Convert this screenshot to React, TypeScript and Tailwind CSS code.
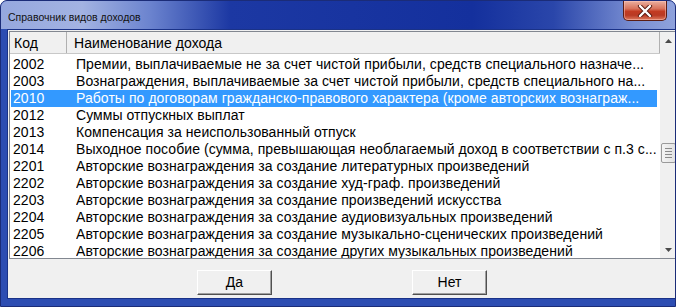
import React from "react";

const rows: [string, string][] = [
  ["2002", "Премии, выплачиваемые не за счет чистой прибыли, средств специального назначе..."],
  ["2003", "Вознаграждения, выплачиваемые за счет чистой прибыли, средств специального на..."],
  ["2010", "Работы по договорам гражданско-правового характера (кроме авторских вознаграж..."],
  ["2012", "Суммы отпускных выплат"],
  ["2013", "Компенсация за неиспользованный отпуск"],
  ["2014", "Выходное пособие (сумма, превышающая необлагаемый доход в соответствии с п.3 с..."],
  ["2201", "Авторские вознаграждения за создание литературных произведений"],
  ["2202", "Авторские вознаграждения за создание худ-граф. произведений"],
  ["2203", "Авторские вознаграждения за создание произведений искусства"],
  ["2204", "Авторские вознаграждения за создание аудиовизуальных произведений"],
  ["2205", "Авторские вознаграждения за создание музыкально-сценических произведений"],
  ["2206", "Авторские вознаграждения за создание других музыкальных произведений"],
];

function CloseButton() {
  return (
    <div className="mr-[8px] flex h-[20px] w-[44px] items-center justify-center rounded-b-[5px] border border-t-0 border-[#5b1d14] bg-[linear-gradient(180deg,#eab0a0_0%,#d8735c_40%,#c23b22_55%,#b93a24_75%,#dd7a5e_100%)] shadow-[inset_0_0_0_1px_rgba(255,200,190,0.5)]">
      <svg width="16" height="12" viewBox="0 0 16 12">
        <path d="M3 1 L13 11 M13 1 L3 11" stroke="#5a1a12" strokeWidth="4.2" strokeLinecap="round" />
        <path d="M3 1 L13 11 M13 1 L3 11" stroke="#ffffff" strokeWidth="2.4" strokeLinecap="round" />
      </svg>
    </div>
  );
}

function Arrow({ up }: { up: boolean }) {
  return (
    <div className="flex h-[17px] w-full items-center justify-center">
      <svg width="7" height="4" viewBox="0 0 7 4">
        {up ? <path d="M0 4 L3.5 0 L7 4 Z" fill="#4a4a4a" /> : <path d="M0 0 L3.5 4 L7 0 Z" fill="#4a4a4a" />}
      </svg>
    </div>
  );
}

function Scrollbar() {
  return (
    <div className="flex w-[17px] shrink-0 flex-col bg-[#f0f0f0]">
      <Arrow up />
      <div className="flex-1 pt-[94px]">
        <div className="mx-[1px] flex h-[20px] flex-col items-center justify-center gap-[2px] rounded-[2px] border border-[#9a9a9a] bg-[linear-gradient(90deg,#f4f4f4,#e2e2e2)]">
          <div className="h-px w-[7px] bg-[#8a8a8a]" />
          <div className="h-px w-[7px] bg-[#8a8a8a]" />
          <div className="h-px w-[7px] bg-[#8a8a8a]" />
          <div className="h-px w-[7px] bg-[#8a8a8a]" />
        </div>
      </div>
      <Arrow up={false} />
    </div>
  );
}

function Btn({ label }: { label: string }) {
  return (
    <div className="flex h-[25px] w-[75px] items-center justify-center border border-t-white border-l-white border-b-[#505050] border-r-[#505050] bg-[#f0f0f0] text-[14px] text-black shadow-[inset_-1px_-1px_0_#a0a0a0]">
      {label}
    </div>
  );
}

export default function App() {
  return (
    <div
      className="flex h-[307px] w-[676px] flex-col overflow-hidden rounded-t-[7px] border border-[#1b2c78] bg-[#2d4db2] text-black"
      style={{ fontFamily: '"Liberation Sans", Arial, sans-serif' }}
    >
      {/* Title bar */}
      <div className="flex h-[28px] shrink-0 items-start justify-between bg-[linear-gradient(90deg,#96a8de_0%,#a3b3e2_12%,#6c84cf_22%,#1c38a3_34%,#14309d_70%,#2a46aa_82%,#7a8fd3_94%,#8fa2dc_100%)]">
        <div className="pl-[7px] pt-[10px] text-[10.5px] leading-[12px] text-[#111]">Справочник видов доходов</div>
        <CloseButton />
      </div>

      {/* Body */}
      <div className="flex min-h-0 flex-1 px-[6px] pb-[7px]">
        <div className="flex flex-1 flex-col border border-[#1a3288] bg-[#f0f0f0] px-[1px] pt-[1px]">
          {/* List view */}
          <div className="flex h-[228px] shrink-0 overflow-hidden border border-[#828790] bg-white">
            <div className="flex min-w-0 flex-1 flex-col">
              <div className="flex h-[22px] shrink-0 border-b border-[#c8c8c8] bg-[#f0f0f0] text-[14px] leading-[20px] tracking-[0.06px]">
                <div className="w-[57px] shrink-0 border-r border-[#b0b0b0] pl-[4px] pt-[1px]">Код</div>
                <div className="flex-1 border-r border-[#b0b0b0] pl-[7px] pt-[1px]">Наименование дохода</div>
              </div>
              <div className="flex flex-col pt-[2px] pr-[3px] text-[14px] leading-[17px] tracking-[0.06px]">
                {rows.map(([code, name]) => {
                  const sel = code === "2010";
                  return (
                    <div
                      key={code}
                      className={
                        sel
                          ? "ml-[1px] flex h-[17px] bg-[#3399ff] text-white"
                          : "ml-[1px] flex h-[17px] text-black"
                      }
                    >
                      <div className="w-[65px] shrink-0 pl-[2px]">{code}</div>
                      <div className="min-w-0 flex-1 overflow-hidden whitespace-nowrap">{name}</div>
                    </div>
                  );
                })}
              </div>
            </div>
            <Scrollbar />
          </div>

          {/* Buttons */}
          <div className="flex gap-[140px] pl-[188px] pt-[11px]">
            <Btn label="Да" />
            <Btn label="Нет" />
          </div>
        </div>
      </div>
    </div>
  );
}
